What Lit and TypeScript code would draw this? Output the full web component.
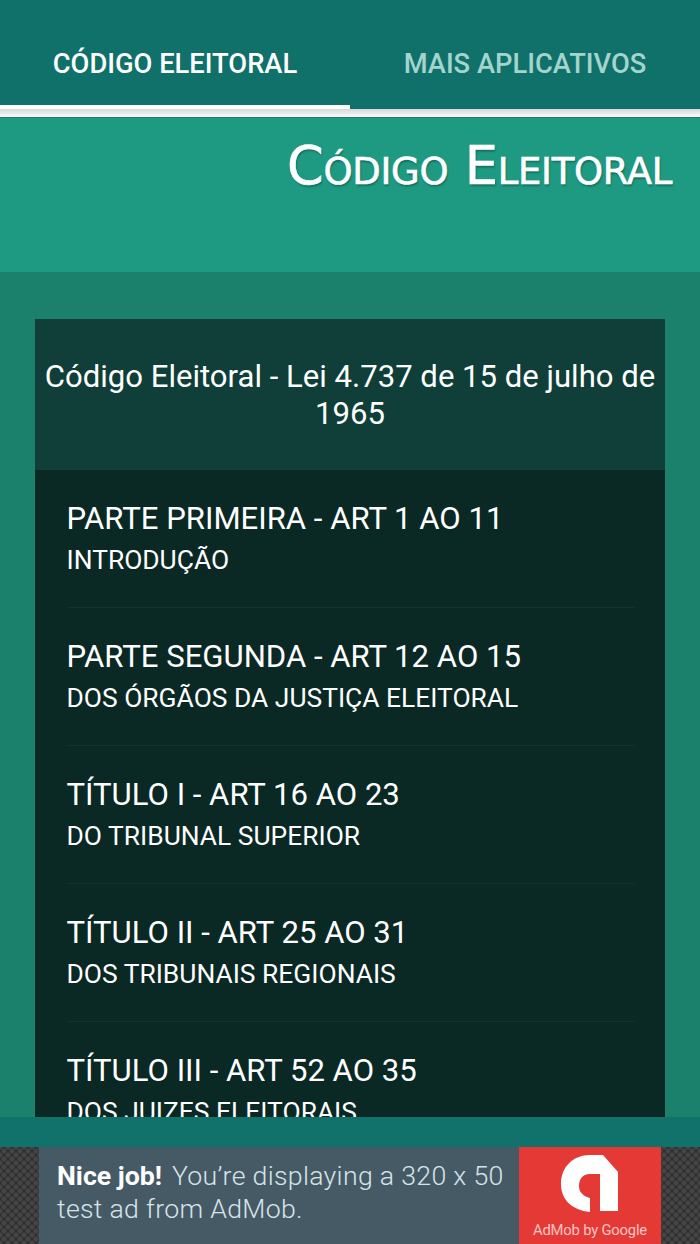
import { LitElement, html, css } from "lit";
import { customElement } from "lit/decorators.js";

const ROWS = [
  ["PARTE PRIMEIRA - ART 1 AO 11", "INTRODUÇÃO"],
  ["PARTE SEGUNDA - ART 12 AO 15", "DOS ÓRGÃOS DA JUSTIÇA ELEITORAL"],
  ["TÍTULO I - ART 16 AO 23", "DO TRIBUNAL SUPERIOR"],
  ["TÍTULO II - ART 25 AO 31", "DOS TRIBUNAIS REGIONAIS"],
  ["TÍTULO III - ART 52 AO 35", "DOS JUIZES ELEITORAIS"],
];

@customElement("app-root")
export class AppRoot extends LitElement {
  static styles = css`
    :host { display: block; width: 700px; height: 1244px; font-family: Roboto, "Liberation Sans", sans-serif; overflow: hidden; }
    .page { display: flex; flex-direction: column; height: 1244px; }
    .tabs { display: flex; height: 109px; flex: none; background: #10706a; }
    .tab { flex: 1; display: flex; align-items: center; justify-content: center; box-sizing: border-box; height: 109px; padding-top: 18px; font-size: 27.3px; font-weight: 500; color: #a3d5cd; }
    .tab.on { color: #fff; border-bottom: 4px solid #fff; padding-top: 22px; }
    .rule { flex: none; height: 8px; background: linear-gradient(#d8d8d8, #ececec 60%, #fff); }
    .hero { flex: none; height: 155px; box-sizing: border-box; background: #1f9a82; border-top: 1px solid #17806e; padding: 18px 28px 0 0; text-align: right; }
    .hero h1 { margin: 0; font-family: "DejaVu Sans", sans-serif; font-variant: small-caps; font-weight: 400; font-size: 52.7px; line-height: 60px; letter-spacing: -0.3px; color: #fff; -webkit-text-stroke: 0.6px #fff; text-shadow: 1px 2px 2px rgba(0, 60, 50, 0.45); }
    .body { flex: 1; min-height: 0; overflow: hidden; background: #1b806c; padding: 47px 35px 0; }
    .card-head { height: 151px; box-sizing: border-box; background: #0f3f38; color: #fff; display: flex; align-items: center; justify-content: center; text-align: center; font-size: 31.1px; line-height: 37px; padding: 0 8px; }
    .list { background: #0a2824; padding: 0 31.5px; color: #fff; }
    .row { height: 138px; box-sizing: border-box; border-bottom: 1px solid #12332f; padding-top: 31px; }
    .row b { display: block; font-weight: 400; font-size: 31.1px; line-height: 36px; }
    .row span { display: block; font-size: 26.4px; line-height: 30px; margin-top: 8px; }
    .strip { flex: none; height: 30px; background: #10726a; }
    .ad { flex: none; height: 97px; display: flex; background-color: #2f2f2f; background-image: radial-gradient(circle at 50% 50%, #454545 0 2px, transparent 3px), radial-gradient(circle at 50% 50%, #454545 0 2px, transparent 3px); background-size: 8px 8px; background-position: 0 0, 4px 4px; }
    .ad-box { width: 622px; margin: 0 39px; display: flex; background: #465a66; }
    .ad-text { flex: 1; padding: 13px 0 0 18px; font-size: 26.7px; line-height: 33px; color: #d6e4ea; font-weight: 300; letter-spacing: 0.3px; white-space: nowrap; }
    .ad-text strong { font-weight: 700; color: #fff; letter-spacing: 0; margin-right: 3px; }
    .ad-logo { width: 142px; background: #e53935; display: flex; flex-direction: column; align-items: center; padding-top: 7px; box-sizing: border-box; }
    .ad-logo svg { display: block; }
    .ad-logo small { font-size: 14.8px; line-height: 18px; margin-top: 7px; color: #f9c6c3; white-space: nowrap; letter-spacing: -0.2px; }
  `;

  render() {
    return html`
      <div class="page">
        <div class="tabs">
          <div class="tab on">CÓDIGO ELEITORAL</div>
          <div class="tab">MAIS APLICATIVOS</div>
        </div>
        <div class="rule"></div>
        <div class="hero"><h1>Código Eleitoral</h1></div>
        <div class="body">
          <div class="card-head">Código Eleitoral - Lei 4.737 de 15 de julho de 1965</div>
          <div class="list">
            ${ROWS.map(([a, b]) => html`<div class="row"><b>${a}</b><span>${b}</span></div>`)}
          </div>
        </div>
        <div class="strip"></div>
        <div class="ad">
          <div class="ad-box">
            <div class="ad-text"><strong>Nice job!</strong> You’re displaying a 320 x 50<br />test ad from AdMob.</div>
            <div class="ad-logo">
              <svg width="60" height="60" viewBox="0 0 60 60" fill="#fff">
                <path d="M30 1H43L58 18V57H40V20H30C22 20 19 26 19 32C19 38 23 42 30 44V58C12 56 1 46 1 30C1 13 13 1 30 1Z" />
              </svg>
              <small>AdMob by Google</small>
            </div>
          </div>
        </div>
      </div>
    `;
  }
}
